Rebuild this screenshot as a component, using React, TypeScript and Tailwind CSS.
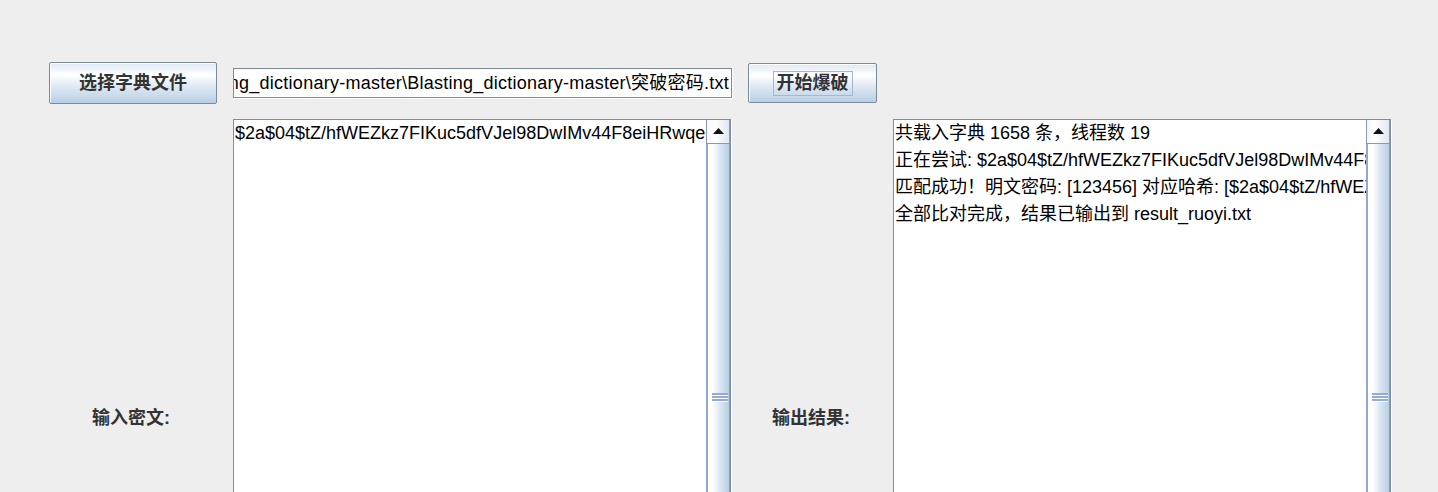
import React from "react";

const HASH = "$2a$04$tZ/hfWEZkz7FIKuc5dfVJel98DwIMv44F8eiHRwqe";

function ScrollBar() {
  return (
    <div className="flex w-[24px] shrink-0 flex-col self-stretch">
      <div className="flex h-[24px] shrink-0 items-center justify-center border-l border-r border-b border-[#8a9bb1] bg-[linear-gradient(to_right,#f3f6fa_0%,#ffffff_35%,#eef3f8_70%,#dfe7f0_100%)]">
        <svg width="11" height="6" viewBox="0 0 11 6" className="mt-[-2px]">
          <path d="M5.5 0 L11 6 L0 6 Z" fill="#111" />
        </svg>
      </div>
      <div className="relative flex-1 border-l-2 border-r border-l-[#8fa8d6] border-r-[#8a9bb1] bg-[linear-gradient(to_right,#ffffff_0%,#ffffff_22%,#dde8f3_55%,#b8cfe5_100%)]">
        <div className="absolute left-[4px] right-[1px] top-[249px] flex flex-col">
          <div className="h-[2px] bg-[#93abd6]" />
          <div className="h-[1px] bg-white" />
          <div className="h-[2px] bg-[#93abd6]" />
          <div className="h-[1px] bg-white" />
          <div className="h-[2px] bg-[#93abd6]" />
          <div className="h-[1px] bg-white" />
        </div>
      </div>
      <div className="flex h-[24px] shrink-0 items-center justify-center border-l border-r border-t border-[#8a9bb1] bg-[linear-gradient(to_right,#f3f6fa_0%,#ffffff_35%,#eef3f8_70%,#dfe7f0_100%)]">
        <svg width="11" height="6" viewBox="0 0 11 6">
          <path d="M0 0 L11 0 L5.5 6 Z" fill="#111" />
        </svg>
      </div>
    </div>
  );
}

function TextArea({ lines }: { lines: string[] }) {
  return (
    <div className="flex h-[555px] w-[498px] shrink-0 border border-[#7f8fa3] bg-white shadow-[1px_1px_0_#ffffff]">
      <div className="min-w-0 flex-1 overflow-hidden whitespace-pre pl-[1px] text-[18px] leading-[27px] text-black">
        {lines.map((l, i) => (
          <div key={i}>{l}</div>
        ))}
      </div>
      <ScrollBar />
    </div>
  );
}

export default function App() {
  return (
    <div className="h-[492px] w-[1438px] overflow-hidden bg-[#eeeeee] pl-[49px] pt-[62px] font-['Liberation_Sans','Noto_Sans_CJK_SC',sans-serif]">
      <div className="flex items-center">
        <div className="flex h-[42px] w-[168px] shrink-0 items-center justify-center rounded-[2px] border border-[#7a8a99] bg-[linear-gradient(to_bottom,#dde8f3_0%,#ffffff_30%,#dde8f3_60%,#b8cfe5_100%)] text-[18px] font-bold text-[#333333] shadow-[inset_1px_1px_0_#ffffff]">
          选择字典文件
        </div>
        <div className="ml-[16px] flex h-[30px] w-[499px] shrink-0 items-center justify-end overflow-hidden border border-[#7a8a99] bg-white pr-[2px] shadow-[1px_1px_0_#ffffff]">
          <span className="whitespace-nowrap text-[18px] leading-[22px] tracking-[0.25px] text-black">
            {"ng_dictionary-master\\Blasting_dictionary-master\\突破密码.txt"}
          </span>
        </div>
        <div className="ml-[16px] flex h-[40px] w-[129px] shrink-0 items-center justify-center rounded-[2px] border border-[#7a8a99] bg-[linear-gradient(to_bottom,#dde8f3_0%,#ffffff_30%,#dde8f3_60%,#b8cfe5_100%)] shadow-[inset_1px_1px_0_#ffffff]">
          <span className="border border-[#a3b8cc] px-[3px] text-[18px] font-bold leading-[23px] text-[#333333]">
            开始爆破
          </span>
        </div>
      </div>

      <div className="mt-[15px] flex items-start">
        <div className="w-[184px] shrink-0 pl-[43px] pt-[287px] text-[18px] font-bold leading-[24px] text-[#333333]">
          输入密文:
        </div>
        <TextArea lines={[HASH]} />
        <div className="w-[162px] shrink-0 pl-[41px] pt-[287px] text-[18px] font-bold leading-[24px] text-[#333333]">
          输出结果:
        </div>
        <TextArea
          lines={[
            "共载入字典 1658 条，线程数 19",
            "正在尝试: " + HASH,
            "匹配成功！明文密码: [123456] 对应哈希: [" + HASH + "]",
            "全部比对完成，结果已输出到 result_ruoyi.txt",
          ]}
        />
      </div>
    </div>
  );
}
